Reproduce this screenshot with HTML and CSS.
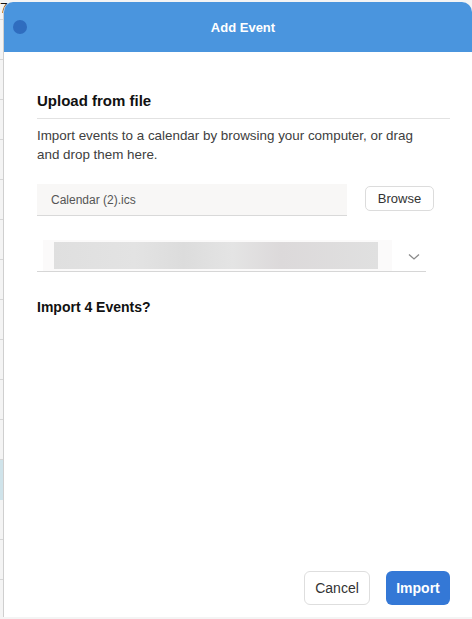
FILE: index.html
```html
<!DOCTYPE html>
<html>
<head>
<meta charset="utf-8">
<link rel="stylesheet" href="styles.css">
</head>
<body>
<div class="backdrop"><span class="bg-digit">7</span><div class="bg-event"></div></div>
<div class="modal">
  <header class="modal-header">
    <span class="dot"></span>
    <h1 class="title">Add Event</h1>
  </header>
  <main class="modal-body">
    <h2 class="section-title">Upload from file</h2>
    <p class="desc">Import events to a calendar by browsing your computer, or drag and drop them here.</p>
    <div class="file-row">
      <div class="file-input">Calendar (2).ics</div>
      <button class="btn browse">Browse</button>
    </div>
    <div class="select-row">
      <div class="select-value"><div class="blur"></div></div>
      <svg class="chev" width="12" height="8" viewBox="0 0 12 8"><path d="M1 1.5 L6 6 L11 1.5" fill="none" stroke="#8a8a8a" stroke-width="1.3"/></svg>
    </div>
    <h3 class="confirm">Import 4 Events?</h3>
  </main>
  <footer class="modal-footer">
    <button class="btn cancel">Cancel</button>
    <button class="btn primary">Import</button>
  </footer>
</div>
</body>
</html>
```
FILE: styles.css
```css
html, body {
  margin: 0;
  padding: 0;
  height: 100%;
}
body {
  position: relative;
  background: #f4f4f4 repeating-linear-gradient(to bottom, transparent 0 19px, #d6d6d6 19px 20px, transparent 20px 40px);
  font-family: "Liberation Sans", Arial, sans-serif;
  overflow: hidden;
}
.backdrop {
  position: absolute;
  inset: 0;
}
.bg-digit {
  position: absolute;
  left: 0;
  top: 0;
  font-size: 14px;
  line-height: 16px;
  color: #111;
}
.bg-event {
  position: absolute;
  left: 0;
  top: 460px;
  width: 4px;
  height: 40px;
  background: #cfe3ea;
}
.modal {
  position: relative;
  margin: 2px 0 0 3px;
  height: 615px;
  background: #fff;
  border-left: 1px solid #cfcfcf;
  border-radius: 10px 10px 0 0;
  overflow: hidden;
  display: flex;
  flex-direction: column;
}
.modal-header {
  height: 50px;
  background: #4a95de;
  display: flex;
  align-items: center;
  justify-content: center;
  position: relative;
}
.dot {
  position: absolute;
  left: 9px;
  top: 18px;
  width: 14px;
  height: 14px;
  border-radius: 50%;
  background: #2f6dbf;
}
.title {
  margin: 0 0 0 10px;
  font-size: 13px;
  font-weight: bold;
  color: #fff;
}
.modal-body {
  flex: 1;
  padding: 40px 22px 0 33px;
}
.section-title {
  margin: 0;
  font-size: 15px;
  font-weight: bold;
  color: #111;
  padding-bottom: 9px;
  border-bottom: 1px solid #e2e2e2;
}
.desc {
  margin: 7px 0 0;
  font-size: 13.4px;
  line-height: 19px;
  color: #404040;
  max-width: 388px;
}
.file-row {
  display: flex;
  align-items: center;
  margin-top: 20px;
}
.file-input {
  width: 296px;
  height: 31px;
  background: #f8f7f6;
  border-bottom: 1px solid #d9d9d9;
  font-size: 12px;
  color: #555;
  display: flex;
  align-items: center;
  padding-left: 14px;
}
.btn {
  font-family: "Liberation Sans", Arial, sans-serif;
  border-radius: 6px;
  cursor: pointer;
}
.browse {
  margin-left: 18px;
  margin-top: -3px;
  height: 25px;
  width: 69px;
  padding: 0;
  background: #fff;
  border: 1px solid #dcdcdc;
  border-radius: 5px;
  font-size: 13px;
  color: #333;
}
.select-row {
  display: flex;
  align-items: center;
  width: 389px;
  height: 31px;
  margin-top: 24px;
  border-bottom: 1px solid #d6d6d6;
  position: relative;
}
.select-value {
  margin-left: 6px;
  width: 349px;
  height: 31px;
  background: #fbfafa;
  display: flex;
  align-items: center;
}
.blur {
  margin-left: 11px;
  width: 324px;
  height: 27px;
  background: linear-gradient(to right, #dfdfdf 0%, #e3e3e3 25%, #dcdcdc 40%, #e4e4e4 55%, #dcd9da 70%, #e0e0e0 100%);
}
.chev {
  margin-left: 16px;
  margin-top: 2px;
}
.confirm {
  margin: 27px 0 0;
  font-size: 14px;
  font-weight: bold;
  color: #111;
}
.modal-footer {
  display: flex;
  justify-content: flex-end;
  gap: 16px;
  padding: 0 22px 12px 0;
}
.cancel {
  width: 66px;
  height: 34px;
  background: #fff;
  border: 1px solid #dedede;
  font-size: 14px;
  color: #333;
}
.primary {
  width: 64px;
  height: 34px;
  background: #3478d6;
  border: none;
  font-size: 14px;
  font-weight: bold;
  color: #fff;
}
```
